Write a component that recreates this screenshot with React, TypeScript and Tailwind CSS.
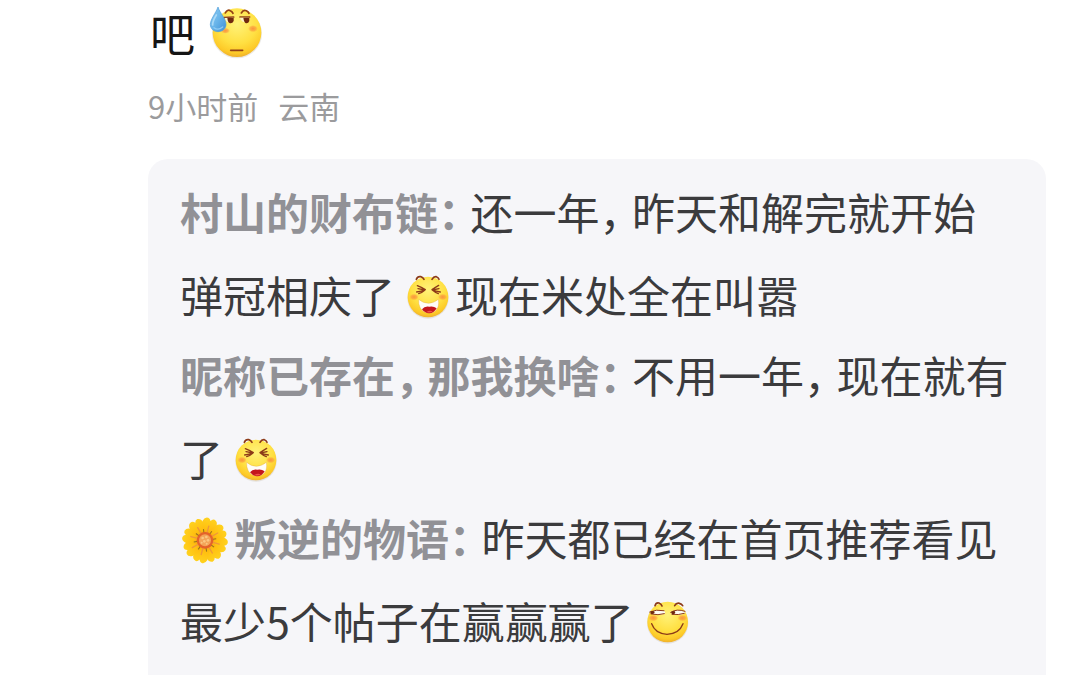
import type { ReactNode } from "react";

function Gradients({ id }: { id: string }) {
  return (
    <defs>
      <radialGradient id={id} cx="0.5" cy="0.32" r="0.68">
        <stop offset="0" stopColor="#fff27a" />
        <stop offset="0.6" stopColor="#ffe042" />
        <stop offset="0.88" stopColor="#fdca28" />
        <stop offset="1" stopColor="#efb02c" />
      </radialGradient>
      <radialGradient id={`${id}-blush`}>
        <stop offset="0" stopColor="#fb8a3c" stopOpacity="0.9" />
        <stop offset="0.6" stopColor="#fb943c" stopOpacity="0.6" />
        <stop offset="1" stopColor="#fba53c" stopOpacity="0" />
      </radialGradient>
    </defs>
  );
}

function SweatFace() {
  return (
    <svg role="img" aria-label="汗" viewBox="27 15 162 162" className="h-[54px] w-[54px] shrink-0">
      <Gradients id="sweat" />
      <defs>
        <linearGradient id="drop" x1="0" y1="0" x2="1" y2="1">
          <stop offset="0" stopColor="#8fcdf3" />
          <stop offset="0.5" stopColor="#69b5ea" />
          <stop offset="1" stopColor="#3f8fd4" />
        </linearGradient>
      </defs>
      <ellipse cx="111" cy="98" rx="75" ry="74" fill="#d8d3cb" opacity="0.5" />
      <circle cx="111" cy="95" r="73" fill="url(#sweat)" />
      <ellipse cx="159" cy="83" rx="15" ry="11" fill="url(#sweat-blush)" />
      <ellipse cx="76" cy="89" rx="14" ry="9" fill="url(#sweat-blush)" />
      <g fill="none" stroke="#944016" strokeLinecap="round">
        <path d="M76 36Q82 24 91 29Q97 32 99 37" strokeWidth="5" />
        <path d="M124 36Q130 25 139 29Q145 32 147 37" strokeWidth="5" />
        <path d="M72 50L101 48M120 48L149 48" strokeWidth="5" />
        <path d="M92 148H128" strokeWidth="5" />
      </g>
      <path d="M74 51L100 50Q98 65 85 64Q77 62 74 51Z" fill="#fff6c8" />
      <path d="M120 50L147 50Q145 65 132 63Q124 62 120 50Z" fill="#fff6c8" />
      <path d="M82 50H101V60Q98 68 90 67Q83 65 82 50Z" fill="#70280f" />
      <path d="M130 50H148V60Q145 68 138 67Q132 64 130 50Z" fill="#70280f" />
      <path d="M54 18C48 35 31 55 31 70C31 84 42 92 54 92C67 92 78 84 78 70C77 51 60 37 54 18Z" fill="url(#drop)" stroke="#4c9cda" strokeWidth="2" />
      <path d="M49 42C43 52 37 62 38 72" fill="none" stroke="#a9d9f7" strokeWidth="5" strokeLinecap="round" />
      <path d="M42 80Q54 90 68 78" fill="none" stroke="#8fcbf3" strokeWidth="4" strokeLinecap="round" />
    </svg>
  );
}

function LaughFace({ id }: { id: string }) {
  return (
    <svg role="img" aria-label="笑眼" viewBox="18 18 132 135" className="-mt-[10px] mr-[5px] ml-[11px] inline-block h-[45px] w-[44px] align-middle">
      <Gradients id={id} />
      <ellipse cx="84" cy="90" rx="62" ry="62" fill="#d8d3cb" opacity="0.6" />
      <circle cx="84" cy="87" r="61" fill={`url(#${id})`} />
      <ellipse cx="42" cy="87" rx="14" ry="10" fill={`url(#${id}-blush)`} />
      <ellipse cx="128" cy="87" rx="14" ry="10" fill={`url(#${id}-blush)`} />
      <g fill="none" stroke="#8c3a18" strokeLinecap="round" strokeLinejoin="round">
        <path d="M49 34Q53 24 62 26Q69 28 72 34" strokeWidth="5" />
        <path d="M96 34Q101 25 109 26Q115 28 117 34" strokeWidth="5" />
        <path d="M52 53Q64 58 76 65Q64 70 50 72M54 62L75 66Q66 74 56 77" strokeWidth="4" />
        <path d="M116 52Q106 58 96 65Q108 70 121 72M117 62L97 66Q105 73 115 77" strokeWidth="4" />
      </g>
      <path d="M56 94Q69 106 86 106Q102 105 115 94Q119 117 107 128Q97 137 84 135Q67 133 60 118Q55 108 56 94Z" fill="#fffdf8" stroke="#e0a03c" strokeWidth="1" />
      <path d="M66 124Q74 113 88 116Q100 113 110 121Q102 136 87 136Q74 135 66 124Z" fill="#c4161c" />
      <path d="M79 132Q89 126 98 130Q91 136 79 132Z" fill="#ee5148" />
    </svg>
  );
}

function SlyFace() {
  return (
    <svg role="img" aria-label="滑稽" viewBox="21 21 132 135" className="-mt-[10px] ml-[12px] inline-block h-[45px] w-[44px] align-middle">
      <Gradients id="sly" />
      <ellipse cx="86" cy="90" rx="62" ry="62" fill="#d8d3cb" opacity="0.6" />
      <circle cx="86" cy="87" r="61" fill="url(#sly)" />
      <ellipse cx="43" cy="75" rx="15" ry="10" fill="url(#sly-blush)" />
      <ellipse cx="130" cy="75" rx="15" ry="10" fill="url(#sly-blush)" />
      <g fill="none" stroke="#8c3a18" strokeLinecap="round">
        <path d="M48 38Q51 28 60 30Q67 33 69 39" strokeWidth="5" />
        <path d="M107 38Q112 29 121 31Q128 33 131 38" strokeWidth="5" />
      </g>
      <path d="M34 57Q52 47 75 53Q80 56 78 62Q60 68 35 62Z" fill="#fffdf2" />
      <path d="M95 57Q115 46 136 55Q141 60 136 62Q117 69 99 64Z" fill="#fffdf2" />
      <g fill="none" stroke="#8c3a18" strokeLinecap="round">
        <path d="M32 57Q52 48 75 53M36 63Q58 68 76 62" strokeWidth="3" />
        <path d="M95 58Q113 46 138 55M99 64Q118 67 136 61" strokeWidth="3" />
        <path d="M38 92Q48 121 84 124Q121 122 132 92" strokeWidth="4" />
      </g>
      <path d="M34 56Q44 51 47 58Q46 65 35 62Z" fill="#70280f" />
      <path d="M96 57Q107 51 109 58Q108 66 99 64Z" fill="#70280f" />
    </svg>
  );
}

const petals = [15, 60, 105, 150, 195, 240, 285, 330];

function Flower() {
  return (
    <svg role="img" aria-label="花" viewBox="15 21 150 147" className="-mt-2 mr-1 inline-block h-[49px] w-[50px] align-middle">
      <defs>
        <linearGradient id="petal" x1="0" y1="0" x2="0" y2="1">
          <stop offset="0" stopColor="#ffd21f" />
          <stop offset="0.5" stopColor="#ffc010" />
          <stop offset="1" stopColor="#f09018" />
        </linearGradient>
      </defs>
      {petals.map((angle) => (
        <g key={angle} transform={`rotate(${angle} 90 94)`}>
          <path d="M83 94C72 72 65 52 68 38Q72 25 82 26Q88 27 91 34Q95 26 102 27Q113 31 112 43C111 57 104 74 97 94Z" fill="url(#petal)" />
          <path d="M90 75V50" stroke="#ef963b" strokeWidth="4" strokeLinecap="round" />
        </g>
      ))}
      {petals.map((angle) => (
        <path key={angle} d="M90 74V60" stroke="#94701c" strokeWidth="3" transform={`rotate(${angle + 22} 90 94)`} />
      ))}
      <circle cx="90" cy="94" r="25" fill="#e5622a" />
      <circle cx="90" cy="94" r="18" fill="#f3a458" />
      <g fill="#fbc782">
        <circle cx="83" cy="87" r="4" />
        <circle cx="94" cy="84" r="4" />
        <circle cx="99" cy="94" r="4" />
        <circle cx="88" cy="97" r="4" />
        <circle cx="95" cy="104" r="3" />
        <circle cx="80" cy="101" r="3" />
      </g>
    </svg>
  );
}

function Mark({ children }: { children: string }) {
  return <span className="mr-[11px] [font-feature-settings:'halt']">{children}</span>;
}

function Name({ children }: { children: ReactNode }) {
  return <b className="font-bold text-[#919196]">{children}</b>;
}

export default function App() {
  return (
    <main className="flex min-h-screen flex-col bg-white pr-[34px] pl-[148px] font-['Noto_Sans_CJK_SC',sans-serif]">
      <p className="flex items-start gap-[14px] pt-1.5 pl-0.5 text-[45px] leading-[54px] text-[#151515]">
        吧
        <SweatFace />
      </p>
      <p className="mt-[23px] flex gap-5 text-[31px] leading-[46px] text-[#9b9b9d]">
        <span>9小时前</span>
        <span>云南</span>
      </p>
      <section className="mt-[30px] flex-1 rounded-t-[20px] bg-[#f6f6f9] px-8 pt-[11px] text-[43px] leading-[83px] text-[#3b3b3d]">
        <p>
          <Name>村山的财布链<Mark>：</Mark></Name>
          还一年<Mark>，</Mark>昨天和解完就开始弹冠相庆了
          <LaughFace id="laugh-a" />
          现在米处全在叫嚣
        </p>
        <p className="-mt-[3px]">
          <Name>昵称已存在<Mark>，</Mark>那我换啥<Mark>：</Mark></Name>
          不用一年<Mark>，</Mark>现在就有了
          <LaughFace id="laugh-b" />
        </p>
        <p className="-mt-[3px]">
          <Flower />
          <Name>叛逆的物语<Mark>：</Mark></Name>
          昨天都已经在首页推荐看见最少5个帖子在赢赢赢了
          <SlyFace />
        </p>
      </section>
    </main>
  );
}
